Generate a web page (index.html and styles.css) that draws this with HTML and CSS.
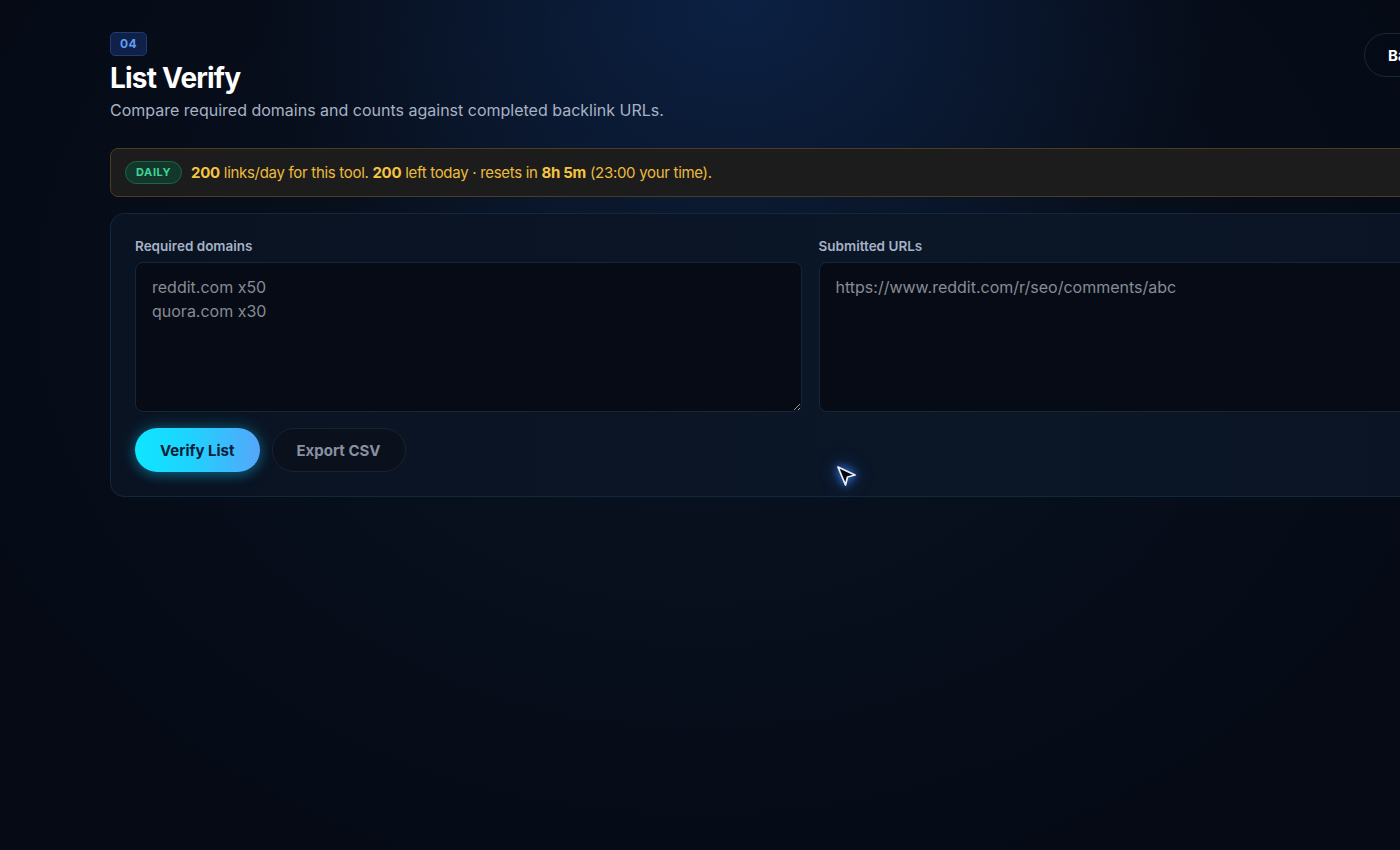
FILE: index.html
```html
<!DOCTYPE html>
<html lang="en">
<head>
<meta charset="utf-8">
<title>List Verify</title>
<link rel="stylesheet" href="styles.css">
</head>
<body>
<main class="page">
  <header class="head">
    <div class="head-text">
      <span class="step">04</span>
      <h1 class="title">List Verify</h1>
      <p class="subtitle">Compare required domains and counts against completed backlink URLs.</p>
    </div>
    <button class="back-btn">Back to tools</button>
  </header>

  <div class="quota">
    <span class="pill">DAILY</span>
    <span class="quota-text"><b>200</b> links/day for this tool. <b>200</b> left today · resets in <b>8h 5m</b> (23:00 your time).</span>
  </div>

  <section class="card">
    <div class="fields">
      <label class="field">
        <span class="label">Required domains</span>
        <textarea class="input" placeholder="reddit.com x50&#10;quora.com x30"></textarea>
      </label>
      <label class="field">
        <span class="label">Submitted URLs</span>
        <textarea class="input" placeholder="https://www.reddit.com/r/seo/comments/abc"></textarea>
      </label>
    </div>
    <div class="actions">
      <button class="btn-primary">Verify List</button>
      <button class="btn-ghost">Export CSV</button>
    </div>
  </section>
</main>

<svg class="cursor" width="24" height="26" viewBox="0 0 24 26" aria-hidden="true">
  <path d="M4 3 L21 11 L13.5 13 L11.5 21 Z" fill="#05070c" stroke="#e6edf7" stroke-width="1.8" stroke-linejoin="round"/>
</svg>
</body>
</html>
```

FILE: styles.css
```css
html, body {
  margin: 0;
  padding: 0;
}
body {
  min-height: 850px;
  overflow: hidden;
  font-family: Inter, "Noto Sans", "Liberation Sans", sans-serif;
  color: #e8eef8;
  background:
    radial-gradient(ellipse 480px 360px at 740px 0px, rgba(14, 40, 84, 0.7), rgba(8, 22, 46, 0) 100%),
    radial-gradient(ellipse 900px 700px at 700px 300px, #0a1424 0%, #060c18 70%, #050a14 100%);
  background-color: #050a14;
}
.page {
  width: 1400px;
  margin-left: 110px;
  padding-top: 32px;
  box-sizing: border-box;
}
.head {
  display: flex;
  justify-content: space-between;
  align-items: flex-start;
}
.head-text {
  display: flex;
  flex-direction: column;
  align-items: flex-start;
}
.step {
  display: inline-block;
  box-sizing: border-box;
  height: 24px;
  padding: 0 9px;
  line-height: 22px;
  font-size: 12px;
  font-weight: 700;
  letter-spacing: 0.5px;
  color: #5f9df2;
  background: #0f2148;
  border: 1px solid #1f3b70;
  border-radius: 5px;
}
.title {
  margin: 5px 0 0;
  font-size: 28px;
  line-height: 34px;
  font-weight: 700;
  letter-spacing: -0.8px;
  color: #ffffff;
}
.subtitle {
  margin: 4px 0 0;
  font-size: 16px;
  line-height: 22px;
  color: #a7b2c4;
}
.back-btn {
  margin-top: 1px;
  height: 44px;
  padding: 0 27px 0 23px;
  border-radius: 22px;
  background: transparent;
  border: 1px solid #17283a;
  color: #ffffff;
  font-family: inherit;
  font-size: 15px;
  font-weight: 700;
}
.quota {
  margin-top: 27px;
  box-sizing: border-box;
  height: 49px;
  display: flex;
  align-items: center;
  gap: 9px;
  padding: 0 14px;
  background: #1d1c1c;
  border: 1px solid #4a3d20;
  border-radius: 8px;
}
.pill {
  box-sizing: border-box;
  height: 23px;
  line-height: 21px;
  padding: 0 10px;
  font-size: 11px;
  font-weight: 700;
  letter-spacing: 0.6px;
  color: #3fd49a;
  background: #11382b;
  border: 1px solid #1e6448;
  border-radius: 12px;
}
.quota-text {
  font-size: 15px;
  letter-spacing: -0.3px;
  color: #ebbb3c;
  margin-top: -1px;
}
.quota-text b {
  font-weight: 700;
  color: #f5c540;
}
.card {
  margin-top: 16px;
  box-sizing: border-box;
  padding: 24px 24px 24px;
  background: linear-gradient(90deg, #0a1322 0%, #0b1627 60%, #0a1424 100%);
  border: 1px solid #12283d;
  border-radius: 14px;
}
.fields {
  display: grid;
  grid-template-columns: 1fr 1fr;
  gap: 17px;
}
.field {
  display: flex;
  flex-direction: column;
}
.label {
  font-size: 13.5px;
  line-height: 17px;
  font-weight: 600;
  color: #a5b2c6;
  margin-bottom: 7px;
}
.input {
  box-sizing: border-box;
  height: 150px;
  padding: 12px 16px;
  font-family: inherit;
  font-size: 16px;
  line-height: 24px;
  color: #dfe6f0;
  background: #060b16;
  border: 1px solid #14273a;
  border-radius: 8px;
  resize: vertical;
  outline: none;
}
.input::placeholder {
  color: #878c95;
}
.actions {
  margin-top: 16px;
  display: flex;
  gap: 12px;
}
.btn-primary {
  height: 44px;
  padding: 0 25px;
  border: none;
  border-radius: 22px;
  font-family: inherit;
  font-size: 15px;
  font-weight: 700;
  color: #0b2036;
  background: linear-gradient(90deg, #0ee6ff 0%, #1fd2ff 45%, #55a6fb 100%);
  box-shadow: 0 0 16px rgba(16, 214, 255, 0.35), 0 4px 12px rgba(0, 180, 255, 0.2);
}
.btn-ghost {
  height: 44px;
  padding: 0 24px;
  border-radius: 22px;
  font-family: inherit;
  font-size: 15px;
  font-weight: 700;
  color: #8990a0;
  background: #0a111d;
  border: 1px solid #172233;
}
.cursor {
  position: absolute;
  left: 834px;
  top: 464px;
  filter: drop-shadow(0 0 4px rgba(60, 140, 255, 0.9)) drop-shadow(0 0 8px rgba(40, 110, 230, 0.6));
}
```
